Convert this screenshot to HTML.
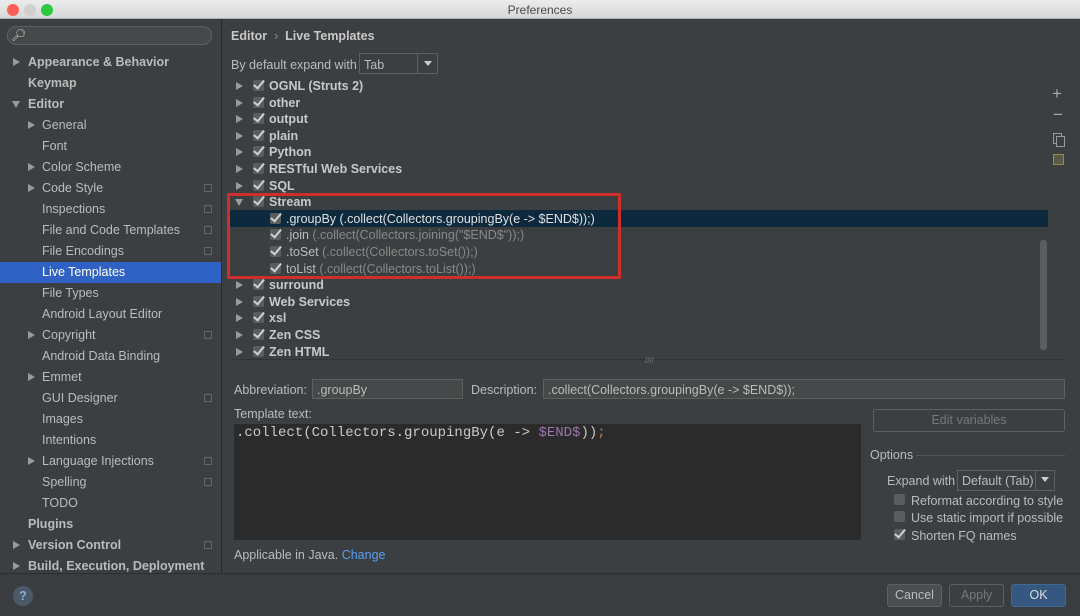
<!DOCTYPE html>
<html><head><meta charset="utf-8"><style>
*{box-sizing:border-box;margin:0;padding:0}
body{width:1080px;height:616px;overflow:hidden;background:#3c3f41;font-family:"Liberation Sans",sans-serif;font-size:12.5px;color:#bbbbbb;position:relative}
.a{position:absolute;white-space:nowrap}
.b{font-weight:bold}
.tri{position:absolute;width:0;height:0;border-top:4px solid transparent;border-bottom:4px solid transparent;border-left:7px solid #9a9a9a}
.tdn{position:absolute;width:0;height:0;border-left:4px solid transparent;border-right:4px solid transparent;border-top:7px solid #9a9a9a}
.cb{position:absolute;width:11px;height:11px;background:#5a5d5f;border-radius:2px}
.cb::after{content:"";position:absolute;left:3px;top:-2px;width:4px;height:9px;border-right:2px solid #d0d0d0;border-bottom:2px solid #d0d0d0;transform:rotate(40deg)}
.ic{position:absolute;width:8px;height:8px;border:1px solid #666;border-radius:1px}
.inp{position:absolute;background:#45494a;border:1px solid #5e6060}
.btn{position:absolute;border:1px solid #5e6060;border-radius:3px;background:#4a4e50;text-align:center;line-height:21px}
</style></head><body>
<div class="a" style="left:0;top:0;width:1080px;height:19px;background:linear-gradient(#ececec,#d8d8d8);border-bottom:1px solid #b0b0b0"></div>
<div class="a" style="left:7px;top:4px;width:12px;height:12px;border-radius:6px;background:#fc5f57"></div>
<div class="a" style="left:24px;top:4px;width:12px;height:12px;border-radius:6px;background:#d0d0d0"></div>
<div class="a" style="left:41px;top:4px;width:12px;height:12px;border-radius:6px;background:#2bc840"></div>
<div class="a" style="left:0;top:3px;width:1080px;text-align:center;font-size:12px;color:#4a4a4a">Preferences</div>
<div class="a" style="left:221px;top:19px;width:1px;height:555px;background:#2b2b2b"></div>
<div class="a" style="left:7px;top:26px;width:205px;height:19px;border:1px solid #5e6060;border-radius:9px;background:#45494a"></div>
<div class="a" style="left:11px;top:28px;font-size:12px;color:#ccc">&#x1F50E;&#xFE0E;</div>
<div class="a" style="left:0;top:262px;width:221px;height:21px;background:#2f62c4"></div>
<div id="side"></div>
<div class="a b" style="left:231px;top:29px;color:#c8c8c8">Editor <span style="font-weight:normal;color:#888">&nbsp;›&nbsp;</span> Live Templates</div>
<div class="a" style="left:231px;top:58px">By default expand with</div>
<div class="inp" style="left:359px;top:53px;width:79px;height:21px;background:#3c3f41"></div>
<div class="a" style="left:364px;top:58px">Tab</div>
<div class="a" style="left:417px;top:54px;width:1px;height:19px;background:#5e6060"></div>
<div class="tdn" style="left:424px;top:61px;border-top-color:#ccc;border-width:5px 4px 0 4px"></div>
<div class="a" style="left:230px;top:210px;width:818px;height:17px;background:#0d293e"></div>
<div class="a" style="left:230px;top:78px;width:820px;height:280px;overflow:hidden" id="tree"></div>
<div class="a" style="left:1040px;top:240px;width:7px;height:110px;background:#5b5e60;border-radius:3px"></div>
<div class="a" style="left:227px;top:193px;width:394px;height:86px;border:3px solid #cf2f2a;z-index:5"></div>
<div class="a" style="left:1052px;top:84px;font-size:17px;color:#aaa">+</div>
<div class="a" style="left:1053px;top:105px;font-size:17px;color:#aaa">−</div>
<div class="a" style="left:1053px;top:133px;width:9px;height:11px;border:1px solid #999"></div>
<div class="a" style="left:1056px;top:136px;width:9px;height:11px;border:1px solid #999;background:#3c3f41"></div>
<div class="a" style="left:1053px;top:154px;width:11px;height:11px;border:1px solid #9a8a50;background:#5b5a45"></div>
<div class="a" style="left:230px;top:359px;width:835px;height:1px;background:#333"></div>
<div class="a" style="left:645px;top:356px;font-size:8px;color:#777">////</div>
<div class="a" style="left:234px;top:383px">Abbreviation:</div>
<div class="inp" style="left:312px;top:379px;width:151px;height:20px"></div>
<div class="a" style="left:317px;top:383px">.groupBy</div>
<div class="a" style="left:471px;top:383px">Description:</div>
<div class="inp" style="left:543px;top:379px;width:522px;height:20px"></div>
<div class="a" style="left:548px;top:383px">.collect(Collectors.groupingBy(e -&gt; $END$));</div>
<div class="a" style="left:234px;top:407px">Template text:</div>
<div class="a" style="left:234px;top:424px;width:627px;height:116px;background:#2b2b2b"></div>
<div class="a" style="left:236px;top:425px;font-family:'Liberation Mono',monospace;font-size:14px;color:#c8c8c8">.collect(Collectors.groupingBy(e -&gt; <span style="color:#9876aa">$END$</span>))<span style="color:#cc7832">;</span></div>
<div class="btn" style="left:873px;top:409px;width:192px;height:23px;background:#3c3f41;color:#777">Edit variables</div>
<div class="a" style="left:870px;top:448px">Options</div>
<div class="a" style="left:916px;top:455px;width:149px;height:1px;background:#555"></div>
<div class="a" style="left:887px;top:474px">Expand with</div>
<div class="inp" style="left:957px;top:470px;width:98px;height:21px;background:#3c3f41"></div>
<div class="a" style="left:962px;top:474px">Default (Tab)</div>
<div class="a" style="left:1035px;top:471px;width:1px;height:19px;background:#5e6060"></div>
<div class="tdn" style="left:1041px;top:477px;border-top-color:#ccc;border-width:5px 4px 0 4px"></div>
<div class="a" style="left:894px;top:494px;width:11px;height:11px;background:#5a5d5f;border-radius:2px"></div>
<div class="a" style="left:911px;top:494px">Reformat according to style</div>
<div class="a" style="left:894px;top:511px;width:11px;height:11px;background:#5a5d5f;border-radius:2px"></div>
<div class="a" style="left:911px;top:511px">Use static import if possible</div>
<div class="cb" style="left:894px;top:529px"></div>
<div class="a" style="left:911px;top:529px">Shorten FQ names</div>
<div class="a" style="left:234px;top:548px">Applicable in Java. <span style="color:#589df6">Change</span></div>
<div class="a" style="left:0;top:573px;width:1080px;height:43px;background:#3a3d3f;border-top:1px solid #2e2e2e"></div>
<div class="a" style="left:13px;top:586px;width:20px;height:20px;border-radius:10px;background:#4b5a68;color:#8fb0d0;text-align:center;line-height:20px;font-weight:bold">?</div>
<div class="btn" style="left:887px;top:584px;width:55px;height:23px;line-height:21px">Cancel</div>
<div class="btn" style="left:949px;top:584px;width:55px;height:23px;background:#3c3f41;color:#777">Apply</div>
<div class="btn" style="left:1011px;top:584px;width:55px;height:23px;background:#365880;border-color:#43688f;color:#ddd">OK</div>
<script>
var s=[["Appearance & Behavior",1,1,0,0],["Keymap",1,0,0,0],["Editor",1,2,0,0],["General",0,1,0,1],["Font",0,0,0,1],["Color Scheme",0,1,0,1],["Code Style",0,1,1,1],["Inspections",0,0,1,1],["File and Code Templates",0,0,1,1],["File Encodings",0,0,1,1],["Live Templates",0,0,0,1],["File Types",0,0,0,1],["Android Layout Editor",0,0,0,1],["Copyright",0,1,1,1],["Android Data Binding",0,0,0,1],["Emmet",0,1,0,1],["GUI Designer",0,0,1,1],["Images",0,0,0,1],["Intentions",0,0,0,1],["Language Injections",0,1,1,1],["Spelling",0,0,1,1],["TODO",0,0,0,1],["Plugins",1,0,0,0],["Version Control",1,1,1,0],["Build, Execution, Deployment",1,1,0,0]];
var o="";s.forEach(function(r,i){var y=62+i*21,x=r[4]?42:28,ax=r[4]?28:13;
if(r[2]==1)o+='<div class="tri" style="left:'+ax+'px;top:'+(y-4)+'px"></div>';
if(r[2]==2)o+='<div class="tdn" style="left:'+(ax-1)+'px;top:'+(y-3)+'px"></div>';
if(r[3])o+='<div class="ic" style="left:204px;top:'+(y-4)+'px"></div>';
o+='<div class="a'+(r[1]?' b':'')+'" style="left:'+x+'px;top:'+(y-7)+'px;'+(i==10?'color:#fff':'')+'">'+r[0].replace("&","&amp;")+'</div>';});
document.getElementById("side").innerHTML=o;
var t=[["OGNL (Struts 2)",0],["other",0],["output",0],["plain",0],["Python",0],["RESTful Web Services",0],["SQL",0],["Stream",2],[".groupBy","(.collect(Collectors.groupingBy(e -> $END$));)",1],[".join","(.collect(Collectors.joining(\"$END$\"));)"],[".toSet","(.collect(Collectors.toSet());)"],["toList","(.collect(Collectors.toList());)"],["surround",0],["Web Services",0],["xsl",0],["Zen CSS",0],["Zen HTML",0]];
var q="";t.forEach(function(r,i){var y=86-78+i*16.6;
if(typeof r[1]=="number"){
if(r[1]==2)q+='<div class="tdn" style="left:5px;top:'+(y-3)+'px"></div>';else q+='<div class="tri" style="left:6px;top:'+(y-4)+'px"></div>';
q+='<div class="cb" style="left:23px;top:'+(y-6)+'px"></div><div class="a b" style="left:39px;top:'+(y-7)+'px;color:#c8c8c8">'+r[0]+'</div>';
}else{var sel=r[2];
q+='<div class="cb" style="left:40px;top:'+(y-6)+'px"></div><div class="a" style="left:56px;top:'+(y-7)+'px;color:'+(sel?'#e0e0e0':'#bbb')+'">'+r[0]+' <span style="color:'+(sel?'#e0e0e0':'#888')+'">'+r[1].replace(/</g,"&lt;").replace(/>/g,"&gt;")+'</span></div>';}
});
document.getElementById("tree").innerHTML=q;
</script>
</body></html>
